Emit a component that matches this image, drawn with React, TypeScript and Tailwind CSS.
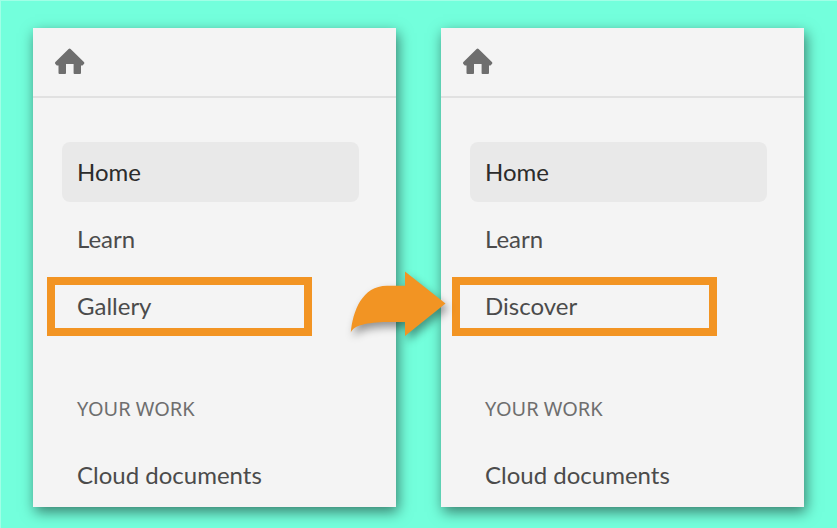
import React from "react";

function HomeIcon() {
  return (
    <svg width="30" height="26" viewBox="0 0 30 26" fill="#6e6e6e" aria-hidden="true">
      <path d="M13.6 0.9 Q14.6 -0.1 15.6 0.9 L28.9 14 Q29.8 15 28.9 15.9 L28 16.9 Q27.5 17.4 26.8 17.4 H26 V24.9 Q26 25.9 25 25.9 H19.4 Q18.6 25.9 18.6 25 V16 H11 V25 Q11 25.9 10.1 25.9 H4.5 Q3.5 25.9 3.5 24.9 V17.4 H2.5 Q1.8 17.4 1.3 16.9 L0.4 15.9 Q-0.4 15 0.4 14 Z" />
    </svg>
  );
}

function ArrowIcon() {
  return (
    <svg
      className="absolute top-[270px] left-1/2 -ml-[69px] overflow-visible drop-shadow-[3px_5px_4px_rgba(0,0,0,0.4)]"
      width="96"
      height="66"
      viewBox="0 0 96 66"
      fill="#f29423"
      aria-hidden="true"
    >
      <path d="M0.8 61.5 C3 40 12 15 37 14.8 H55 V0.5 L95.5 32.5 L55 65 V51 H37 C17 51.5 4 54 0.8 61.5 Z" />
    </svg>
  );
}

const rowClass = "relative flex h-[60px] items-center px-[15px]";

type PanelProps = { label: string; highlighted: string; frameClass: string };

function Panel({ label, highlighted, frameClass }: PanelProps) {
  return (
    <section className="bg-[#f4f4f4] shadow-[2px_5px_13px_0px_rgba(0,0,0,0.5)]">
      <header className="flex h-[70px] items-center border-b-2 border-[#e1e1e1] px-[22px] pb-0.5">
        <a href="#home" aria-label="Home">
          <HomeIcon />
        </a>
      </header>
      <nav aria-label={label} className="pt-11 pr-[37px] pl-[29px] text-2xl text-[#4b4b4b]">
        <ul className="flex flex-col gap-[7px]">
          <li>
            <a href="#home" aria-current="page" className={`${rowClass} rounded-lg bg-[#e9e9e9] text-[#2c2c2c]`}>
              Home
            </a>
          </li>
          <li>
            <a href="#learn" className={rowClass}>
              Learn
            </a>
          </li>
          <li>
            <a href="#gallery" className={rowClass}>
              {highlighted}
              <span className={`absolute top-px bottom-0 w-[265px] border-8 border-[#f29423] ${frameClass}`} />
            </a>
          </li>
        </ul>
        <h2 className="mt-[57px] px-[15px] font-['Noto_Sans',sans-serif] text-xl leading-8 text-[#6e6e6e]">
          YOUR WORK
        </h2>
        <ul className="mt-5">
          <li>
            <a href="#documents" className={rowClass}>
              Cloud documents
            </a>
          </li>
        </ul>
      </nav>
    </section>
  );
}

export default function App() {
  return (
    <main className="relative grid min-h-screen grid-cols-2 gap-[45px] border-t border-l border-[#a0ffe6] bg-[#73ffdc] pt-[27px] pr-[33px] pb-[21px] pl-8 font-[Lato,sans-serif]">
      <Panel label="Previous menu" highlighted="Gallery" frameClass="-left-[15px]" />
      <Panel label="Current menu" highlighted="Discover" frameClass="-left-[18px]" />
      <ArrowIcon />
    </main>
  );
}
